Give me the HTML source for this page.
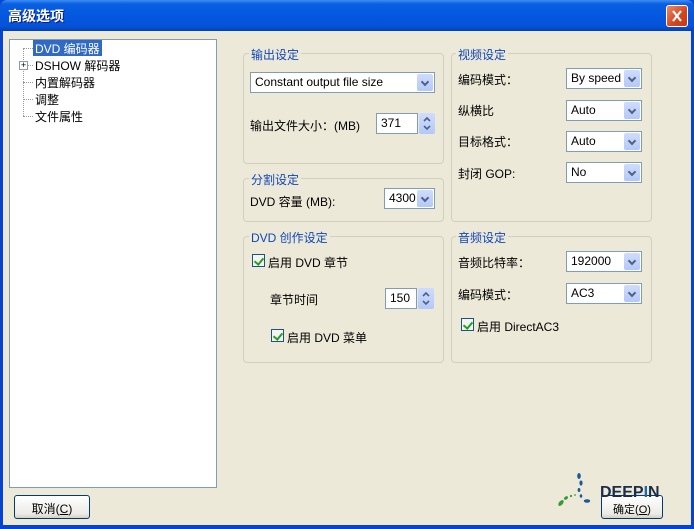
<!DOCTYPE html>
<html><head><meta charset="utf-8"><style>
*{box-sizing:border-box;margin:0;padding:0}
body{width:694px;height:529px;overflow:hidden;background:#0842d0;font-family:"Liberation Sans","Noto Sans CJK SC",sans-serif;font-size:12px;color:#000;position:relative}
.a{position:absolute}
.title{left:0;top:0;width:694px;height:31px;background:linear-gradient(#3d8df5 0,#0a5fe0 4px,#0457e0 50%,#0553d8 85%,#0240b8 100%);border-radius:7px 7px 0 0}
.ttext{left:8px;top:6px;color:#fff;font-weight:bold;font-size:14px;text-shadow:1px 1px #0a1e80}
.close{left:666px;top:5px;width:22px;height:22px;border:1px solid #fff;border-radius:3px;background:linear-gradient(135deg,#e88a6c,#d4441c 60%,#c23a14)}
.body{left:3px;top:31px;width:688px;height:494px;background:#ece9d8}
.tree{left:9px;top:39px;width:208px;height:449px;background:#fff;border:1px solid #7f9db9}
.grp{border:1px solid #d0d0bf;border-radius:4px}
.gl{color:#1146b8;background:#ece9d8;padding:0 2px;font-size:12px}
.cb{background:#fff;border:1px solid #7f9db9;height:21px;line-height:19px;padding:0 0 0 4px;font-size:12px}
.btn{position:absolute;right:1px;top:1px;bottom:1px;width:16px;background:linear-gradient(#cfdcfc,#b4c8f8);border-radius:2px}
.btn:after{content:"";position:absolute;left:5px;top:5px;width:4px;height:4px;border-right:2px solid #4d6185;border-bottom:2px solid #4d6185;transform:rotate(45deg)}
.spin{width:16px;height:21px;background:linear-gradient(#cfdcfc,#b4c8f8);border-radius:2px}
.chk{width:13px;height:13px;border:1px solid #1c5180;background:#f4f4f0}
.chk:after{content:"";position:absolute;left:3px;top:1px;width:4px;height:7px;border-right:2px solid #21a121;border-bottom:2px solid #21a121;transform:rotate(40deg)}
.pb{border:1px solid #003c74;border-radius:3px;background:linear-gradient(#fff,#ecebe6 80%,#d6d0c5);text-align:center;padding-top:4px}
.dot{border-left:1px dotted #999}
.hd{border-top:1px dotted #999}
</style></head><body>
<div class="a title"></div>
<div class="a ttext">高级选项</div>
<div class="a close"><svg width="20" height="20" style="position:absolute;left:0;top:0"><path d="M6 5L14 15M14 5L6 15" stroke="#fff" stroke-width="2.2"/></svg></div>
<div class="a body"></div>
<div class="a tree"></div>
<div class="a dot" style="left:23px;top:48px;height:68px"></div>
<div class="a hd" style="left:23px;top:48px;width:10px"></div>
<div class="a hd" style="left:23px;top:65px;width:10px"></div>
<div class="a hd" style="left:23px;top:82px;width:10px"></div>
<div class="a hd" style="left:23px;top:99px;width:10px"></div>
<div class="a hd" style="left:23px;top:116px;width:10px"></div>
<div class="a" style="left:19px;top:61px;width:9px;height:9px;border:1px solid #8a9bb0;background:#fff;font-size:9px;line-height:6px;text-align:center">+</div>
<div class="a" style="left:33px;top:40px;background:#316ac5;color:#fff;padding:0 2px;height:16px">DVD 编码器</div>
<div class="a" style="left:35px;top:57px">DSHOW 解码器</div>
<div class="a" style="left:35px;top:74px">内置解码器</div>
<div class="a" style="left:35px;top:91px">调整</div>
<div class="a" style="left:35px;top:108px">文件属性</div>

<div class="a grp" style="left:243px;top:53px;width:201px;height:111px"></div>
<div class="a gl" style="left:249px;top:46px">输出设定</div>
<div class="a cb" style="left:250px;top:72px;width:185px">Constant output file size<div class="btn"></div></div>
<div class="a" style="left:250px;top:117px">输出文件大小：(MB)</div>
<div class="a cb" style="left:376px;top:113px;width:42px">371</div>
<div class="a spin" style="left:419px;top:113px"><svg width="16" height="21"><path d="M5 8l3-3 3 3M5 13l3 3 3-3" stroke="#4d6185" stroke-width="1.6" fill="none"/></svg></div>

<div class="a grp" style="left:243px;top:178px;width:201px;height:44px"></div>
<div class="a gl" style="left:249px;top:171px">分割设定</div>
<div class="a" style="left:250px;top:193px;font-size:12px">DVD 容量 (MB):</div>
<div class="a cb" style="left:384px;top:188px;width:51px">4300<div class="btn"></div></div>

<div class="a grp" style="left:243px;top:236px;width:201px;height:127px"></div>
<div class="a gl" style="left:249px;top:229px">DVD 创作设定</div>
<div class="a chk" style="left:252px;top:254px"></div>
<div class="a" style="left:268px;top:254px">启用 DVD 章节</div>
<div class="a" style="left:270px;top:291px">章节时间</div>
<div class="a cb" style="left:385px;top:288px;width:32px">150</div>
<div class="a spin" style="left:418px;top:288px"><svg width="16" height="21"><path d="M5 8l3-3 3 3M5 13l3 3 3-3" stroke="#4d6185" stroke-width="1.6" fill="none"/></svg></div>
<div class="a chk" style="left:271px;top:329px"></div>
<div class="a" style="left:287px;top:329px">启用 DVD 菜单</div>

<div class="a grp" style="left:451px;top:53px;width:201px;height:169px"></div>
<div class="a gl" style="left:456px;top:46px">视频设定</div>
<div class="a" style="left:458px;top:71px">编码模式：</div>
<div class="a cb" style="left:566px;top:68px;width:76px">By speed<div class="btn"></div></div>
<div class="a" style="left:458px;top:102px">纵横比</div>
<div class="a cb" style="left:566px;top:100px;width:76px">Auto<div class="btn"></div></div>
<div class="a" style="left:458px;top:133px">目标格式：</div>
<div class="a cb" style="left:566px;top:131px;width:76px">Auto<div class="btn"></div></div>
<div class="a" style="left:458px;top:165px">封闭 GOP:</div>
<div class="a cb" style="left:566px;top:162px;width:76px">No<div class="btn"></div></div>

<div class="a grp" style="left:451px;top:236px;width:201px;height:127px"></div>
<div class="a gl" style="left:456px;top:229px">音频设定</div>
<div class="a" style="left:458px;top:254px">音频比特率：</div>
<div class="a cb" style="left:566px;top:251px;width:76px">192000<div class="btn"></div></div>
<div class="a" style="left:458px;top:286px">编码模式：</div>
<div class="a cb" style="left:566px;top:283px;width:76px">AC3<div class="btn"></div></div>
<div class="a chk" style="left:461px;top:318px"></div>
<div class="a" style="left:477px;top:318px">启用 DirectAC3</div>

<div class="a pb" style="left:14px;top:495px;width:76px;height:24px">取消(<u>C</u>)</div>
<div class="a pb" style="left:601px;top:495px;width:62px;height:24px;font-size:11px;padding-top:5px">确定(<u>O</u>)</div>
<svg class="a" style="left:555px;top:470px" width="50" height="40"><g fill="#1a5a9a"><ellipse cx="24" cy="6" rx="1.8" ry="3"/><ellipse cx="26" cy="13" rx="1.6" ry="2.6"/><ellipse cx="24" cy="20" rx="1.4" ry="2"/><ellipse cx="26" cy="26" rx="1.3" ry="1.7"/><ellipse cx="32" cy="31" rx="3.2" ry="1.7"/></g><g fill="#3a9a3a"><ellipse cx="6" cy="33" rx="2" ry="3.5" transform="rotate(40 6 33)"/><ellipse cx="11" cy="28" rx="1.5" ry="2.2" transform="rotate(55 11 28)"/><circle cx="16" cy="26" r="1.1"/><circle cx="20" cy="25" r="0.9"/></g></svg>
<div class="a" style="left:600px;top:484px;font-family:'Liberation Sans',sans-serif;font-weight:bold;font-size:16px;color:#1c2c4a;letter-spacing:0">DEEP<span style="color:#1a6aaa">I</span>N</div>
</body></html>
